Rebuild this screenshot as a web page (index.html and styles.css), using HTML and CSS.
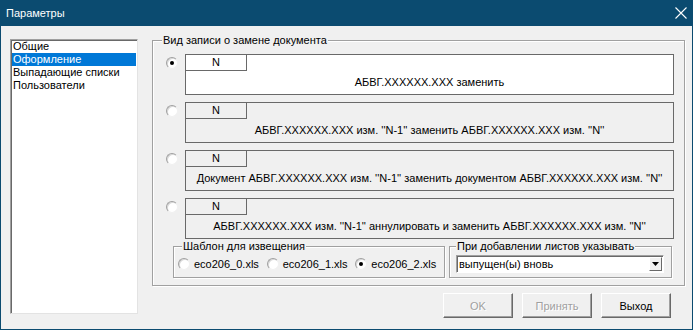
FILE: index.html
```html
<!DOCTYPE html>
<html lang="ru">
<head>
    <meta charset="UTF-8">
    <title>Параметры</title>
    <link rel="stylesheet" href="styles.css">
</head>
<body>
    <div class="window">
        <div class="titlebar">
            <span class="title">Параметры</span>
            <svg class="close" width="12" height="12" viewBox="0 0 12 12">
                <path d="M0.5 0.5 L11.5 11.5 M11.5 0.5 L0.5 11.5" stroke="#fff" stroke-width="1.1" fill="none"/>
            </svg>
        </div>
        <div class="client">
            <div class="list">
                <div class="item">Общие</div>
                <div class="item selected">Оформление</div>
                <div class="item">Выпадающие списки</div>
                <div class="item">Пользователи</div>
            </div>
            <div class="right">
                <div class="group main-group">
                    <span class="group-title">Вид записи о замене документа</span>
                    <div class="option">
                        <span class="radio checked"></span>
                        <div class="box active">
                            <div class="tab">N</div>
                            <div class="box-text">АБВГ.XXXXXX.XXX заменить</div>
                        </div>
                    </div>
                    <div class="option">
                        <span class="radio"></span>
                        <div class="box">
                            <div class="tab">N</div>
                            <div class="box-text">АБВГ.XXXXXX.XXX изм. ''N-1'' заменить АБВГ.XXXXXX.XXX изм. ''N''</div>
                        </div>
                    </div>
                    <div class="option">
                        <span class="radio"></span>
                        <div class="box">
                            <div class="tab">N</div>
                            <div class="box-text">Документ АБВГ.XXXXXX.XXX изм. ''N-1'' заменить документом АБВГ.XXXXXX.XXX изм. ''N''</div>
                        </div>
                    </div>
                    <div class="option">
                        <span class="radio"></span>
                        <div class="box">
                            <div class="tab">N</div>
                            <div class="box-text">АБВГ.XXXXXX.XXX изм. ''N-1'' аннулировать и заменить АБВГ.XXXXXX.XXX изм. ''N''</div>
                        </div>
                    </div>
                    <div class="sub-row">
                        <div class="group sub-template">
                            <span class="group-title">Шаблон для извещения</span>
                            <div class="choice"><span class="radio"></span><span>eco206_0.xls</span></div>
                            <div class="choice"><span class="radio"></span><span>eco206_1.xls</span></div>
                            <div class="choice"><span class="radio checked"></span><span>eco206_2.xls</span></div>
                        </div>
                        <div class="group sub-sheets">
                            <span class="group-title">При добавлении листов указывать</span>
                            <div class="combo">
                                <span class="combo-text">выпущен(ы) вновь</span>
                                <span class="combo-btn">
                                    <svg width="7" height="4" viewBox="0 0 7 4"><path d="M0 0 H7 L3.5 4 Z" fill="#000"/></svg>
                                </span>
                            </div>
                        </div>
                    </div>
                </div>
                <div class="buttons">
                    <button class="btn" disabled>OK</button>
                    <button class="btn" disabled>Принять</button>
                    <button class="btn">Выход</button>
                </div>
            </div>
        </div>
    </div>
</body>
</html>
```

FILE: styles.css
```css
body {
    margin: 0;
    background-color: #f0f0f0;
    font-family: 'Liberation Sans', Arial, sans-serif;
    font-size: 11px;
    color: #000;
}
.window {
    width: 693px;
    height: 330px;
    box-sizing: border-box;
    border: 1px solid #0b4b70;
    border-top: none;
    background-color: #f0f0f0;
}
.titlebar {
    height: 26px;
    margin: 0 -1px;
    background-color: #0b4b70;
    display: flex;
    align-items: center;
    justify-content: space-between;
    padding: 0 6px 0 6px;
}
.title {
    color: #fff;
    font-size: 11px;
    margin-top: -1px;
}
.close {
    margin-right: 0;
    margin-top: -1px;
}
.client {
    display: flex;
    padding: 13px 0 0 9px;
}
.list {
    width: 128px;
    height: 275px;
    box-sizing: border-box;
    background-color: #fff;
    border: 1px solid;
    border-color: #a0a0a0 #e3e3e3 #e3e3e3 #a0a0a0;
    box-shadow: inset 1px 1px 0 #696969;
    padding: 0 1px 0 1px;
}
.item {
    height: 13px;
    line-height: 13px;
    padding-left: 1px;
    white-space: nowrap;
}
.item.selected {
    background-color: #0078d7;
    color: #fff;
}
.right {
    margin-left: 14px;
    margin-top: 1px;
}
.group {
    position: relative;
    box-sizing: border-box;
    border: 1px solid #a0a0a0;
    box-shadow: inset 1px 1px 0 #fff, 1px 1px 0 #fff;
}
.group-title {
    position: absolute;
    top: -7px;
    left: 9px;
    padding: 0 1px;
    line-height: 13px;
    background-color: #f0f0f0;
    white-space: nowrap;
}
.main-group {
    width: 533px;
    height: 246px;
    padding: 13px 0 0 13px;
}
.option {
    display: flex;
    margin-bottom: 7px;
}
.radio {
    position: relative;
    display: inline-block;
    flex: none;
    width: 12px;
    height: 12px;
    box-sizing: border-box;
    border-radius: 50%;
    background-color: #fff;
    border: 1px solid;
    border-color: #a0a0a0 #f0f0f0 #f0f0f0 #a0a0a0;
    box-shadow: inset 1px 1px 0 #d8d8d8;
}
.radio.checked::after {
    content: "";
    position: absolute;
    left: 3px;
    top: 3px;
    width: 4px;
    height: 4px;
    border-radius: 50%;
    background-color: #000;
}
.option .radio {
    margin-top: 3px;
    margin-right: 7px;
}
.box {
    width: 489px;
    height: 41px;
    box-sizing: border-box;
    border: 1px solid #696969;
}
.box.active {
    background-color: #fff;
}
.tab {
    width: 60px;
    height: 15px;
    line-height: 15px;
    text-align: center;
    border-right: 1px solid #696969;
    border-bottom: 1px solid #696969;
}
.box-text {
    line-height: 23px;
    text-align: center;
    white-space: nowrap;
}
.sub-row {
    display: flex;
    margin-top: 5px;
    margin-left: 7px;
}
.sub-template {
    width: 272px;
    height: 32px;
    display: flex;
    padding: 10px 0 0 4px;
}
.sub-template .group-title {
    left: 8px;
}
.choice {
    display: flex;
    align-items: center;
    width: 90px;
    height: 13px;
    white-space: nowrap;
}
.choice .radio {
    margin-right: 4px;
}
.sub-sheets {
    width: 223px;
    height: 32px;
    margin-left: 4px;
    padding: 8px 0 0 6px;
}
.sub-sheets .group-title {
    left: 6px;
}
.combo {
    width: 208px;
    height: 18px;
    box-sizing: border-box;
    display: flex;
    justify-content: space-between;
    background-color: #fff;
    border: 1px solid;
    border-color: #a0a0a0 #fff #fff #a0a0a0;
    box-shadow: inset 1px 1px 0 #696969;
}
.combo-text {
    line-height: 16px;
    padding-left: 2px;
}
.combo-btn {
    width: 13px;
    height: 14px;
    margin: 1px 1px 0 0;
    box-sizing: border-box;
    display: flex;
    align-items: center;
    justify-content: center;
    background-color: #f0f0f0;
    border: 1px solid;
    border-color: #fff #696969 #696969 #fff;
}
.buttons {
    display: flex;
    justify-content: flex-end;
    gap: 9px;
    margin-top: 7px;
    padding-right: 14px;
}
.btn {
    width: 70px;
    height: 25px;
    padding: 0;
    font-family: 'Liberation Sans', Arial, sans-serif;
    font-size: 11px;
    color: #000;
    background-color: #f0f0f0;
    border: 1px solid;
    border-color: #fff #696969 #696969 #fff;
    box-shadow: inset -1px -1px 0 #a0a0a0;
}
.btn:disabled {
    color: #a0a0a0;
    text-shadow: 1px 1px 0 #fff;
}
```
